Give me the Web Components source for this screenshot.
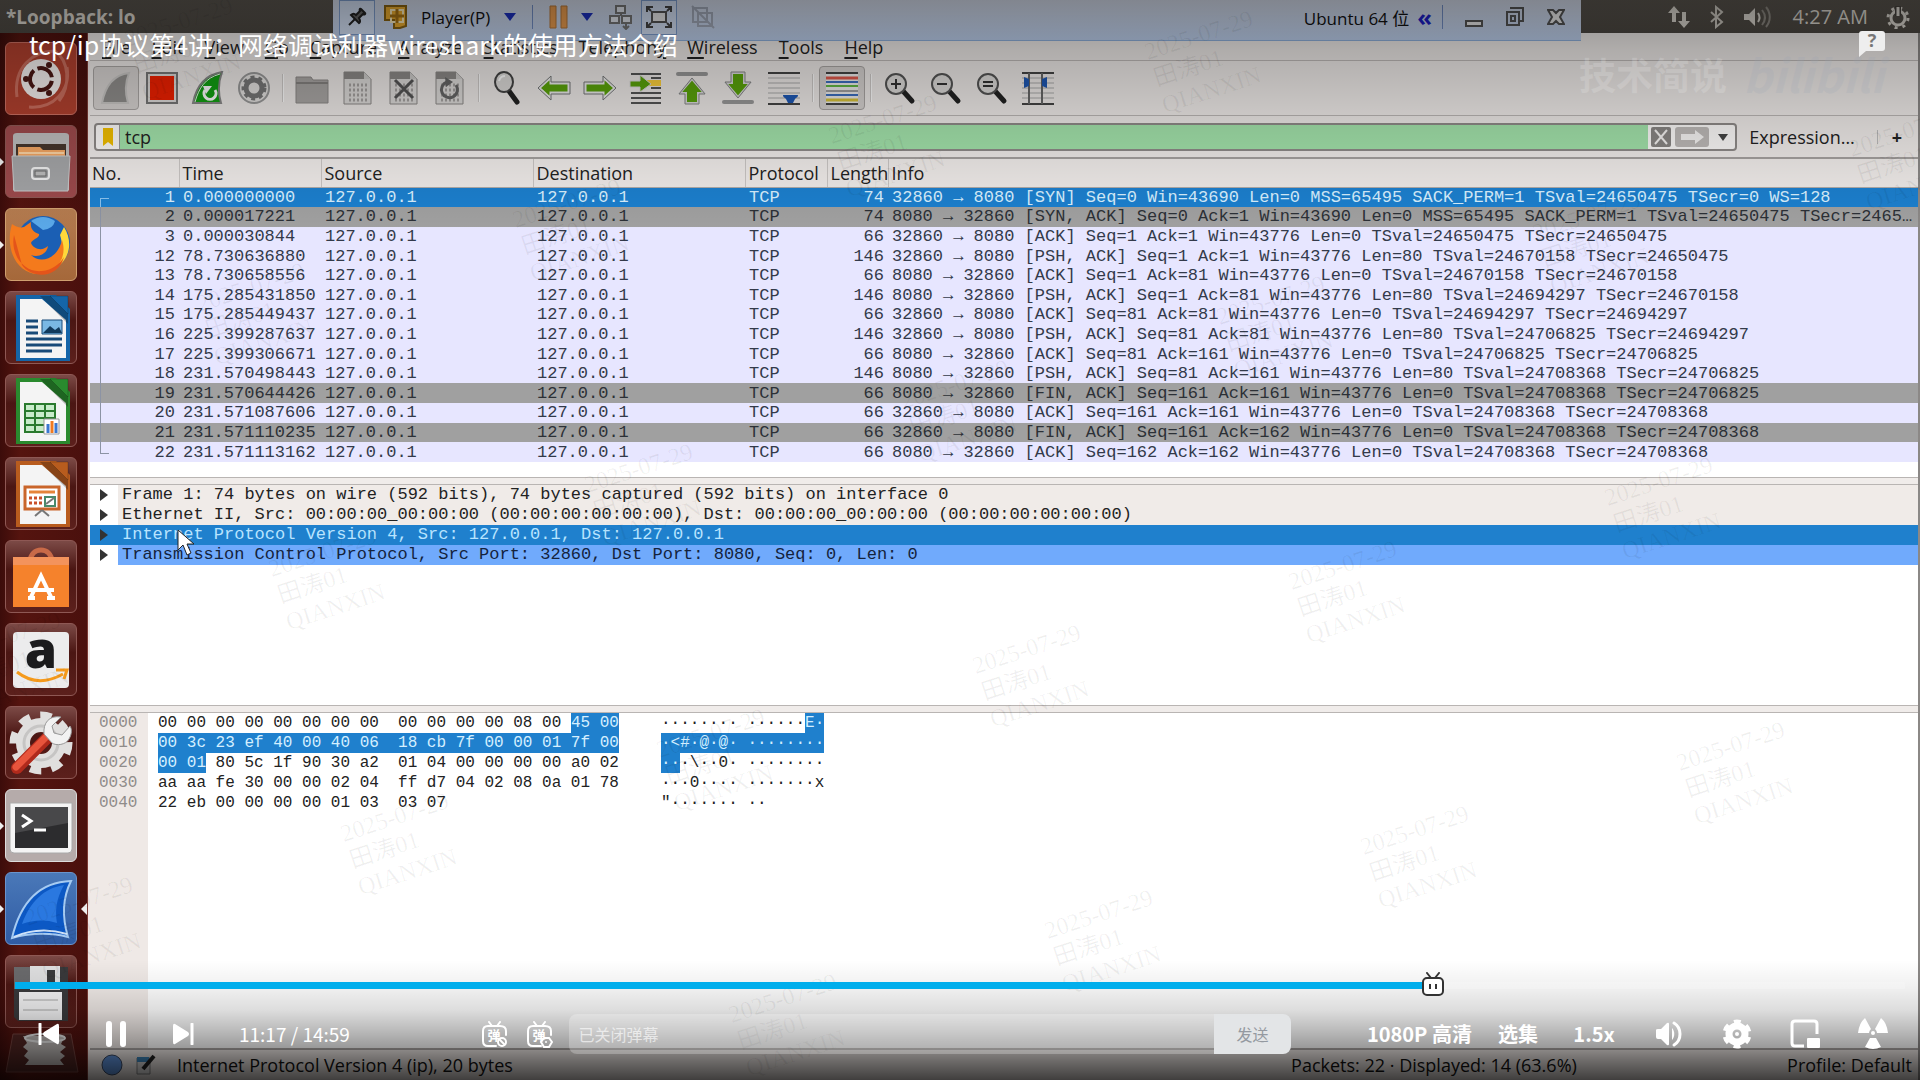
<!DOCTYPE html>
<html lang="zh-CN">
<head>
<meta charset="utf-8">
<title>tcp/ip协议第4讲</title>
<style>
    body {
        margin: 0;
        background: #000;
        font-family: "Open Sans", "Noto Sans CJK SC", sans-serif;
    }
</style>
</head>
<body>
<video-player>
    <ubuntu-desktop slot="screen"></ubuntu-desktop>
    <water-mark slot="overlay"></water-mark>
    <video-header slot="overlay">tcp/ip协议第4讲：网络调试利器wireshark的使用方法介绍</video-header>
    <player-controls slot="controls" current="677" duration="899"></player-controls>
</video-player>

<script>
const svg = (w, h, body) =>
    `<svg width="${w}" height="${h}" viewBox="0 0 ${w} ${h}" fill="none" aria-hidden="true">${body}</svg>`;

const page = `<path d="M3 1h20l7 7v25H3z" fill="#dedcda" stroke="#8d8a88"/><path d="M3 1h20l7 7H3z" fill="#8d8a88"/><path d="M23 1v7h7" fill="#d0cecc"/>`;
const bits = `<path d="M8 14h18M8 19h18M8 24h18M8 29h18" stroke="#a5a2a0" stroke-width="3" stroke-dasharray="2 2"/>`;
const lens = `<path d="M20 20l9 10" stroke="#222" stroke-width="5" stroke-linecap="round"/><circle cx="13" cy="13" r="10" fill="#dedcda" stroke="#555" stroke-width="2"/>`;
const lines = `<path d="M1 7h32M1 12h32M1 17h32M1 22h32M1 27h32" stroke="#aaa" stroke-width="1"/><path d="M1 2h32M1 33h32" stroke="#444" stroke-width="2"/>`;

const ICONS = {
    fin: svg(34, 34, `<path d="M3 32C6 16 14 4 30 2c-4 10-4 20-1 30z" fill="#8f8d8b" stroke="#c8c6c4" stroke-width="2"/>`),
    stop: svg(34, 34, `<path d="M2 2h30v30H2z" fill="#dedcda" stroke="#777" stroke-width="2"/><path d="M5 5h24v24H5z" fill="#f02000"/>`),
    restart: svg(34, 34, `<path d="M2 32C5 16 13 4 31 1c-4 11-4 21-1 31z" fill="#12a012" stroke="#888" stroke-width="2"/><path d="M4 31C8 17 14 7 29 3" stroke="#eee"/><path d="M14 19a6 6 0 1 0 10 0" stroke="#fff" stroke-width="3"/><path d="M12 15h9l-6 8z" fill="#fff"/>`),
    options: svg(34, 34, `<circle cx="17" cy="17" r="15" fill="#e4e2e0" stroke="#999" stroke-width="2"/><circle cx="17" cy="17" r="8" stroke="#777" stroke-width="5"/><circle cx="17" cy="17" r="11" stroke="#777" stroke-width="3" stroke-dasharray="4 4"/>`),
    folder: svg(34, 34, `<path d="M1 6h15l2 3h15v23H1z" fill="#aaa7a5" stroke="#8d8a88"/><path d="M1 12h32" stroke="#858280" stroke-width="2"/>`),
    save: svg(34, 34, page + bits),
    close: svg(34, 34, page + bits + `<path d="M8 9l18 18M26 9L8 27" stroke="#555" stroke-width="3"/>`),
    reload: svg(34, 34, page + bits + `<path d="M14 11a8 8 0 1 0 9 3" stroke="#666" stroke-width="3"/><path d="M12 6l8 5-7 5z" fill="#666"/>`),
    find: svg(34, 34, `<path d="M18 20l8 11" stroke="#222" stroke-width="5" stroke-linecap="round"/><ellipse cx="13" cy="11" rx="9" ry="10" fill="#dedcda" stroke="#444" stroke-width="2"/><path d="M8 10c1-4 3-5 6-5" stroke="#fff" stroke-width="2"/>`),
    back: svg(34, 34, `<path d="M2 17L14 6v6h18v10H14v6z" fill="#5ba50a" stroke="#eee" stroke-width="3"/><path d="M1 17L14 5v6h19v12H14v6z" stroke="#777"/>`),
    forward: svg(34, 34, `<path d="M32 17L20 6v6H2v10h18v6z" fill="#5ba50a" stroke="#eee" stroke-width="3"/><path d="M33 17L20 5v6H1v12h19v6z" stroke="#777"/>`),
    goto: svg(34, 34, `<path d="M2 3h30M2 22h30M2 27h30M2 32h30M22 7h10M22 17h10" stroke="#555" stroke-width="2"/><path d="M18 12h14" stroke="#ffd23c" stroke-width="6"/><path d="M1 10h10V4l11 9-11 8v-5H1z" fill="#5ba50a" stroke="#ddd"/>`),
    first: svg(34, 34, `<path d="M3 3h28" stroke="#999" stroke-width="4" stroke-linecap="round"/><path d="M17 8l12 14h-6v10H11V22H5z" fill="#5ba50a" stroke="#ddd" stroke-width="2"/><path d="M17 7l13 16h-6v10H10V23H4z" stroke="#888"/>`),
    last: svg(34, 34, `<path d="M3 31h28" stroke="#999" stroke-width="4" stroke-linecap="round"/><path d="M17 26L5 12h6V2h12v10h6z" fill="#5ba50a" stroke="#ddd" stroke-width="2"/><path d="M17 27L4 11h6V1h14v10h6z" stroke="#888"/>`),
    autoscroll: svg(34, 34, lines + `<path d="M16 24h15c0 3-3 3-3 4l-2 4h-5l-2-4c0-1-3-1-3-4z" fill="#1e58b4"/>`),
    colorize: svg(34, 34, `<path d="M1 1h32v33H1z" fill="#eee"/><path d="M1 2h32M1 33h32" stroke="#444" stroke-width="2"/><path d="M1 7h32" stroke="#e0584a" stroke-width="3"/><path d="M1 11h32M1 24h32" stroke="#3c6fc0" stroke-width="2"/><path d="M1 15h32" stroke="#62b843" stroke-width="2"/><path d="M1 20h32" stroke="#555"/><path d="M1 29h32" stroke="#d9c33a" stroke-width="3"/>`),
    zoomin: svg(34, 34, lens + `<path d="M8 13h10M13 8v10" stroke="#333" stroke-width="2"/>`),
    zoomout: svg(34, 34, lens + `<path d="M8 13h10" stroke="#333" stroke-width="2"/>`),
    zoomone: svg(34, 34, lens + `<path d="M8 11h10M8 15h10" stroke="#333" stroke-width="2"/>`),
    columns: svg(34, 34, lines + `<path d="M8 2v31M21 2v31" stroke="#666" stroke-width="2"/><path d="M3 6l5 2v7l-5 2zM26 6l-5 2v7l5 2z" fill="#1e58b4"/>`),

    pin: svg(20, 20, `<path d="M2 18l6-6" stroke="#222" stroke-width="2"/><path d="M4 8l8 8c2-1 1-3 0-5l4-4c1 1 3 0 2-1l-4-4c-1-1-2 1-1 2L9 8C8 7 6 6 4 8z" fill="#666" stroke="#222" stroke-width="2"/>`),
    vmware: svg(26, 26, `<path d="M2 2h21v20l-6 2h-6v-8H2z" fill="#f0b030" stroke="#8a6412" stroke-width="2"/><path d="M8 6h12v12H8z" stroke="#fff0c0" stroke-width="2"/><path d="M14 5v14M7 12h14" stroke="#a87414" stroke-width="3"/>`),
    pause: svg(20, 24, `<path d="M1 1h6v22H1zM12 1h6v22h-6z" fill="#f0a050" stroke="#b87838"/>`),
    network: svg(24, 26, `<path d="M7 2h9v7H7zM1 12h9v7H1zM13 12h9v7h-9z" fill="#e8ecf4" stroke="#777" stroke-width="2"/><path d="M12 9v3M17 19v6M14 22l3 3 3-3" stroke="#777" stroke-width="2"/>`),
    fullscreen: svg(26, 22, `<path d="M6 6h14v10H6z" fill="#eee" stroke="#555" stroke-width="2"/><path d="M1 6V1h6M19 1h6v5M25 16v5h-6M7 21H1v-5M1 1l4 4M25 1l-4 4M25 21l-4-4M1 21l4-4" stroke="#444" stroke-width="2"/>`),
    unity: svg(26, 24, `<path d="M2 3h14v14H2zM7 8h14v13H7zM1 1l22 22" stroke="#a3abbb" stroke-width="2"/>`),
    min: svg(18, 24, `<path d="M1 16h16v5H1z" fill="#eee" stroke="#555" stroke-width="2"/>`),
    restore: svg(20, 20, `<path d="M5 1h13v13h-3M2 5h12v13H2z" stroke="#555" stroke-width="2"/><path d="M6 9h4v5H6z" stroke="#555" stroke-width="2"/>`),
    quit: svg(18, 18, `<path d="M1 2h5l3 3 3-3h5l-4 7 4 7h-5l-3-3-3 3H1l4-7z" fill="#eee" stroke="#555" stroke-width="2"/>`),

    updown: svg(24, 24, `<path d="M1 8l6-7 6 7H9v9H5V8zM23 16l-6 7-6-7h4V7h4v9z" fill="#dedad2"/>`),
    bluetooth: svg(16, 24, `<path d="M2 7l11 10-6 5V2l6 5L2 17" stroke="#cfcbc3" stroke-width="2"/>`),
    sound: svg(28, 24, `<path d="M1 9h5l6-6v18l-6-6H1z" fill="#dedad2"/><path d="M15 8c2 3 2 6 0 9" stroke="#dedad2" stroke-width="2"/><path d="M19 5c4 5 4 10 0 15M23 2c5 6 5 14 0 20" stroke="#8d8982" stroke-width="2"/>`),
    power: svg(24, 24, `<circle cx="12" cy="13" r="7" stroke="#dedad2" stroke-width="3"/><circle cx="12" cy="13" r="10" stroke="#dedad2" stroke-width="3" stroke-dasharray="3 5"/><path d="M12 1v10" stroke="#45413c" stroke-width="6"/><path d="M12 2v9" stroke="#dedad2" stroke-width="3"/>`),

    dash: svg(64, 64, `<path d="M8 50C4 20 24 4 46 4c14 10 16 34 4 50M20 60C44 62 62 44 58 20" stroke="#e29a8c" stroke-width="3" opacity=".5"/><circle cx="32" cy="32" r="20" fill="#f5f1ef"/><circle cx="32" cy="32" r="11" stroke="#4a1814" stroke-width="4" stroke-dasharray="19 4" transform="rotate(10 32 32)"/><g fill="#4a1814"><circle cx="17" cy="32" r="3"/><circle cx="40" cy="18" r="3"/><circle cx="40" cy="46" r="3"/></g>`),
    files: svg(64, 64, `<path d="M4 6q0-3 4-3h48q4 0 4 3v54H4z" fill="#bdbcbc"/><path d="M7 14h50v16H7z" fill="#46362c"/><path d="M9 17h22l3 3h22v12H9z" fill="#f2a562"/><path d="M10 23h45" stroke="#fbd3a4" stroke-width="2"/><path d="M3 26h58l-2 35H5z" fill="#a3a4a6" stroke="#c8c9ca"/><rect x="23" y="38" width="17" height="11" rx="3" stroke="#eee" stroke-width="2"/><rect x="26" y="41" width="11" height="5" fill="#bbb" stroke="#666"/>`),
    firefox: svg(66, 64, `<circle cx="35" cy="30" r="27" fill="#1b5fb4"/><path d="M23 8q12-8 24 0-2 8-12 9z" fill="#5aa8e8"/><path d="M56 14c10 16 5 34-10 42 8-10 10-22 6-34z" fill="#ffd83a"/><path d="M4 11c4 3 8 4 12 3l7-5c-1 6 2 10 8 12 1 4-7 5-8 9 3 7 12 8 17 3-1 8-10 12-17 9 10 10 27 3 31-15 6 18-6 34-24 34C10 61-4 37 4 11z" fill="#f47a1c"/><path d="M6 22c-4 20 10 38 28 36 10-1 18-7 22-14-6 22-32 22-42 8z" fill="#e4541a"/>`),
    writer: doc("#1565a8", `<path d="M18 29h12M18 35h12M18 41h12M18 47h36M18 53h36M18 59h26" stroke="#184a78" stroke-width="3"/><path d="M34 28h20v14H34z" fill="#7ab8e4" stroke="#184a78"/><path d="M35 41l7-7 5 4 4-3 3 6z" fill="#123a5c"/>`),
    calc: doc("#2a8a2e", `<path d="M17 29h30v28H17z" fill="#c8ecca" stroke="#2a7a2e" stroke-width="2"/><path d="M17 36h30M17 43h30M17 50h30M27 29v28M37 29v28" stroke="#2a7a2e" stroke-width="2"/><path d="M36 44h15v15H36z" fill="#fff" stroke="#999"/><path d="M40 49v9M48 48v10" stroke="#3b78d0" stroke-width="3"/><path d="M44 46v12" stroke="#f07a20" stroke-width="3"/>`),
    impress: doc("#b85c1e", `<path d="M17 29h34v22H17z" fill="#fff" stroke="#c9652a" stroke-width="3"/><path d="M21 34h26" stroke="#e6843a" stroke-width="3"/><path d="M21 40h13M21 45h13" stroke="#c9502a" stroke-width="3" stroke-dasharray="3 2"/><path d="M37 39h10v9H37z" stroke="#4a8a6a" stroke-width="2"/><path d="M38 46l8-6M34 52l-7 6M34 52l7 6" stroke="#777" stroke-width="2"/>`),
    software: svg(62, 62, `<path d="M20 16c0-16 22-16 22 0" stroke="#c86a48" stroke-width="5"/><path d="M3 11h56v50H3z" fill="#f5822c"/><path d="M3 11h56v8H3z" fill="#f3935c"/><path d="M20 53l11-23 11 23M18 44h26M18 52h7M37 52h8" stroke="#fff" stroke-width="4"/>`),
    amazon: svg(60, 60, `<rect x="2" y="2" width="56" height="56" rx="4" fill="#ececed"/><text x="30" y="38" font-family="Open Sans" font-weight="800" font-size="52" text-anchor="middle" fill="#1b1b1d">a</text><path d="M6 42c14 11 30 11 46 2" stroke="#f59a1c" stroke-width="3"/><path d="M45 40l11 0-3 9" stroke="#f59a1c" stroke-width="3"/>`),
    settings: svg(66, 66, `<circle cx="33" cy="33" r="18" stroke="#e0dfde" stroke-width="14"/><circle cx="33" cy="33" r="27" stroke="#e0dfde" stroke-width="9" stroke-dasharray="11 10"/><circle cx="33" cy="33" r="17" stroke="#c6c5c4" stroke-width="3"/><path d="M9 58l30-30" stroke="#b02a1c" stroke-width="12" stroke-linecap="round"/><path d="M8 57l29-29" stroke="#e8543c" stroke-width="7" stroke-linecap="round"/><path d="M36 24l8 9c4 3 14 2 17-4 3-5 3-10 1-13l-8 9-8-2-2-7 9-9c-12-2-18 6-17 17z" fill="#f2f2f2" stroke="#999"/>`),
    terminal: svg(66, 62, `<path d="M2 8h62v46q0 4-4 4H6q-4 0-4-4z" fill="#f4f4f4" stroke="#aaa"/><path d="M7 12h53v41H7z" fill="#2c2c2e"/><path d="M7 12h53v16L7 38z" fill="#48484a"/><path d="M14 20l9 6-9 6M26 35h12" stroke="#fff" stroke-width="3"/>`),
    wireshark: svg(66, 66, `<path d="M4 62C12 28 30 6 63 5c-9 18-9 36-3 56-18-5-40-4-56 1z" fill="#0c58c4" stroke="#a6cbf2" stroke-width="2"/><path d="M14 48C22 26 36 12 56 9c-8 14-9 26-7 38-12-4-24-3-35 1z" fill="#2a78e0"/><path d="M6 61c18-8 36-8 53-3" stroke="#cfe2f8" stroke-width="2"/>`),
    floppy: svg(62, 62, `<path d="M4 6h54v54H8l-4-4z" fill="#39393b"/><path d="M4 6h18v22H4z" fill="#6a6a6c"/><path d="M20 5h30v24H20z" fill="#dededf"/><path d="M37 9h8v16h-8z" fill="#3a3a3c"/><path d="M9 31h43v28H9z" fill="#f2f2f3"/><path d="M13 39h35M13 49h35" stroke="#ccc" stroke-width="2"/>`),
    trash: svg(74, 42, `<path d="M8 2h58l7 38H1z" fill="#4c2320" stroke="#70403c"/><path d="M18 4h42l-4 8 5 3-6 5 5 4-5 4 4 5H20l4-5-5-4 4-5-5-4 4-4z" fill="#b3aeac"/><ellipse cx="40" cy="6" rx="20" ry="4" stroke="#ddd" stroke-width="2"/>`),

    expert: svg(22, 22, `<circle cx="11" cy="11" r="10" fill="#5f93dc" stroke="#3a4a66"/>`),
    comment: svg(22, 22, `<path d="M2 4h13v16H2z" fill="#ddd" stroke="#888"/><path d="M2 3h12v5H2z" fill="#3f8ac0"/><path d="M19 2L8 15" stroke="#222" stroke-width="4"/>`),
    bookmark: svg(12, 20, `<path d="M1 1h10v18l-5-4-5 4z" fill="#f0bd00"/>`),
    clear: svg(20, 20, `<rect width="20" height="20" rx="2" fill="#888583"/><path d="M4 3l12 14M16 3L4 17" stroke="#f2f0ef" stroke-width="2"/>`),
    apply: svg(34, 20, `<rect width="34" height="20" rx="3" fill="#bdb9b7"/><path d="M6 7h14V3l9 7-9 7v-4H6z" fill="#f5f3f2"/>`),
    down: svg(10, 8, `<path d="M0 1h10L5 8z" fill="#444"/>`),
    bluedown: svg(12, 8, `<path d="M0 0h12L6 8z" fill="#1c30c0"/>`),

    prev: svg(22, 22, `<path d="M2 1v20" stroke="#fff" stroke-width="3" stroke-linecap="round"/><path d="M19 1q2-1 2 2v16q0 3-2 2L6 13q-2-2 0-4z" fill="#fff"/>`),
    play: svg(22, 26, `<path d="M4 3v20M18 3v20" stroke="#fff" stroke-width="6" stroke-linecap="round"/>`),
    next: svg(22, 22, `<path d="M20 1v20" stroke="#fff" stroke-width="3" stroke-linecap="round"/><path d="M3 1Q1 0 1 3v16q0 3 2 2l13-8q2-2 0-4z" fill="#fff"/>`),
    danmu: tv(`<circle cx="21" cy="21" r="4" stroke="#fff" stroke-width="2"/><path d="M18 18l6 6" stroke="#fff" stroke-width="2"/>`),
    danmuset: tv(`<path d="M18 17h5l3 4-3 5h-5l-3-5z" stroke="#fff" stroke-width="2"/><circle cx="20" cy="21" r="1" fill="#fff"/>`),
    volume: svg(30, 30, `<path d="M2 11q0-1 2-1h3l6-6q2-1 2 1v20q0 2-2 1l-6-6H4q-2 0-2-2z" fill="#fff"/><path d="M18 9c3 3 3 9 0 12z" fill="#fff"/><path d="M20 4c8 5 8 17 0 22" stroke="#fff" stroke-width="3" stroke-linecap="round"/>`),
    gear: svg(30, 30, `<circle cx="15" cy="15" r="8" stroke="#fff" stroke-width="7"/><circle cx="15" cy="15" r="12" stroke="#fff" stroke-width="5" stroke-dasharray="6.57 6" transform="rotate(14 15 15)"/><circle cx="15" cy="15" r="2" fill="#fff"/>`),
    pip: svg(32, 30, `<path d="M15 27H6q-3 0-3-3V5q0-3 3-3h19q3 0 3 3v10" stroke="#fff" stroke-width="3"/><rect x="18" y="19" width="13" height="10" rx="1" fill="#fff"/>`),
    wide: svg(30, 32, `<circle cx="15" cy="15" r="2" fill="#fff"/><path d="M0 15Q1 5 7 0l6 11q-2 2-2 4zM30 15Q29 5 23 0l-6 11q2 2 2 4zM12 20h6l5 9q-8 4-16 0z" fill="#fff"/>`),
    thumb: svg(24, 26, `<path d="M6 1l4 5M18 1l-4 5" stroke="#333" stroke-width="2" stroke-linecap="round"/><rect x="2" y="6" width="20" height="17" rx="4" fill="#fff" stroke="#333" stroke-width="2"/><path d="M9 12v5M15 12v5" stroke="#333" stroke-width="2"/>`),
    help: svg(28, 28, `<path d="M4 1h20q3 0 3 3v14q0 3-3 3H8l-7 6V4q0-3 3-3z" fill="#eee"/><text x="14" y="17" font-family="Open Sans" font-weight="700" font-size="18" text-anchor="middle" fill="#777">?</text>`),
    cursor: svg(18, 28, `<path d="M1 1v20l5-5 4 10 4-2-4-9h7z" fill="#fff" stroke="#222"/>`),
};

function doc(color, body) {
    return svg(66, 72, `<path d="M8 3h40l14 14v52H8z" fill="${color}"/><path d="M12 7h22l24 21v38H12z" fill="#f4f4f4"/><path d="M42 4h18v18z" fill="${color}" stroke="#0003"/><path d="M32 4l28 28V22L42 4z" fill="#0004"/>` + body);
}

function tv(body) {
    return svg(27, 27, `<path d="M8 1l3 4M19 1l-3 4M15 25H7q-5 0-5-5v-10q0-5 5-5h12q6 0 6 5v4" stroke="#fff" stroke-width="2" stroke-linecap="round"/><text x="13" y="19" font-family="Noto Sans CJK SC" font-weight="700" font-size="13" text-anchor="middle" fill="#fff">弹</text>` + body);
}

const BASE = `
    *, *::before { box-sizing: border-box; }
    svg { display: block; flex: none; }
    button, input { font: inherit; color: inherit; background: none; border: 0; padding: 0; margin: 0; }
    button { display: flex; align-items: center; justify-content: center; white-space: nowrap; cursor: pointer; }
`;

class BaseElement extends HTMLElement {
    constructor() {
        super();
        this.attachShadow({ mode: "open" });
    }

    connectedCallback() {
        this.shadowRoot.innerHTML = `<style>${BASE}${this.styles()}</style>${this.render()}`;
    }

    iconButton(name, label, cls = "") {
        return `<button type="button" class="${cls}" aria-label="${label}">${ICONS[name]}</button>`;
    }
}

class VideoPlayer extends BaseElement {
    styles() {
        return `
        :host { display: grid; grid-template: minmax(100vh, auto) / minmax(0, 1fr); overflow: hidden; }
        .layer { grid-area: 1 / 1; display: grid; min-width: 0; isolation: isolate; }
        ::slotted([slot="overlay"]) { grid-area: 1 / 1; }
        .shade {
            pointer-events: none;
            background:
                linear-gradient(#0006, #0004 50px, #0002 130px, #0000 230px),
                linear-gradient(0deg, #000b, #0008 20px, #0006 32px, #0004 50px, #0002 70px, #0001 90px, #0000 120px);
        }
        .overlay { pointer-events: none; }
        .bottom { align-items: end; }
        `;
    }

    render() {
        return `
        <div class="layer"><slot name="screen"></slot></div>
        <div class="layer shade"></div>
        <div class="layer overlay"><slot name="overlay"></slot></div>
        <div class="layer bottom"><slot name="controls"></slot></div>
        `;
    }
}

class UbuntuDesktop extends BaseElement {
    styles() {
        return `
        :host { display: grid; grid-template: 33px minmax(0, 1fr) / 88px minmax(0, 1fr); position: relative; background: #4c110e; }
        top-panel { grid-column: 1 / -1; }
        vm-toolbar { position: absolute; top: 0; left: 333px; right: 339px; }
        .cursor { position: absolute; left: 177px; top: 529px; }
        `;
    }

    render() {
        return `
        <top-panel>*Loopback: lo</top-panel>
        <unity-launcher></unity-launcher>
        <wireshark-window></wireshark-window>
        <vm-toolbar></vm-toolbar>
        <div class="cursor">${ICONS.cursor}</div>
        `;
    }
}

class TopPanel extends BaseElement {
    styles() {
        return `
        :host { display: flex; align-items: center; justify-content: space-between; padding: 0 10px 0 6px;
            background: linear-gradient(#5c5750, #4b4741); color: #dedad2; font-size: 19px; }
        .tray { display: flex; align-items: center; gap: 18px; font-size: 20px; }
        .tray span { margin-left: 4px; }
        `;
    }

    render() {
        return `<b><slot></slot></b>
        <div class="tray">${ICONS.updown}${ICONS.bluetooth}${ICONS.sound}<span>4:27 AM</span>${ICONS.power}</div>`;
    }
}

class VmToolbar extends BaseElement {
    styles() {
        return `
        :host { display: flex; justify-content: space-between; height: 41px; padding: 0 16px 6px 6px;
            background: linear-gradient(#d8dfee, #bdd0ee); border-bottom: 1px solid #8fb0dc; font-size: 17px; color: #111; }
        div { display: flex; align-items: center; }
        .box { width: 36px; height: 35px; border: 1px solid #7f9fd0; background: #d6e3f8; }
        .sep { width: 1px; height: 24px; background: #7490c8; }
        .left { gap: 8px; }
        .player { gap: 14px; margin: 0 8px 0 4px; }
        .pause { gap: 12px; margin: 0 8px; }
        .box + .off { margin-left: 6px; }
        .right { gap: 22px; }
        .name { gap: 8px; }
        .more { color: #1c20c8; font-size: 24px; line-height: 24px; font-weight: 700; }
        .name .sep { margin-left: 2px; }
        `;
    }

    render() {
        return `
        <div class="left">
            ${this.iconButton("pin", "Pin", "box")}
            ${ICONS.vmware}
            <button type="button" class="player">Player(P) ${ICONS.bluedown}</button>
            <span class="sep"></span>
            <button type="button" class="pause" aria-label="Suspend">${ICONS.pause}${ICONS.bluedown}</button>
            ${this.iconButton("network", "Send keys")}
            ${this.iconButton("fullscreen", "Full screen", "box")}
            ${this.iconButton("unity", "Unity", "off")}
        </div>
        <div class="right">
            <div class="name"><span>Ubuntu 64 位</span><span class="more">«</span><span class="sep"></span></div>
            ${this.iconButton("min", "Minimize")}
            ${this.iconButton("restore", "Restore")}
            ${this.iconButton("quit", "Close")}
        </div>
        `;
    }
}

class UnityLauncher extends BaseElement {
    styles() {
        return `
        :host { display: block; padding: 9px 10px 0 5px; border-right: 1px solid #7c3a34;
            background: linear-gradient(90deg, #3c0c0a, #55140f 20px, #4a100d); }
        nav { display: grid; grid-auto-rows: 73px; gap: 10px; margin-bottom: 4px; }
        button { position: relative; border-radius: 6px; border: 1px solid #8e5854; background: linear-gradient(#7c4a46, #4b1613 40%, #5c201c); }
        .running::before { content: ""; position: absolute; left: -6px; top: 32px; border: 4px solid transparent; border-left-color: #eee; border-right: 0; }
        .dash { background: #b0402e; border-color: #cc7062; }
        .files { background: #9c4a4c; }
        .firefox { background: linear-gradient(#b57c50, #a5683a); border-color: #d0a070; }
        .terminal { background: #b5abaa; border-color: #ddd; }
        .wireshark { background: linear-gradient(#4a78b8, #2f5ca4); border-color: #6a94cc; }
        .wireshark::after { content: ""; position: absolute; right: -11px; top: 30px; border: 6px solid transparent; border-right-color: #eee; border-left: 0; }
        .trash { border: 0; background: none; }
        `;
    }

    render() {
        const apps = ["dash", "files", "firefox", "writer", "calc", "impress", "software", "amazon", "settings", "terminal", "wireshark", "floppy"];
        const running = ["files", "firefox", "terminal", "wireshark"];
        const item = (name) => this.iconButton(name, name, name + (running.includes(name) ? " running" : ""));
        return `<nav>${apps.map(item).join("")}</nav>${item("trash")}`;
    }
}

class WiresharkWindow extends BaseElement {
    styles() {
        return `
        :host { display: flex; flex-direction: column; min-width: 0; background: #f0ecea; border-left: 2px solid #f0e6e4;
            border-right: 2px solid #8b8886; font-size: 18px; color: #222; }
        packet-list { flex: 318 1 0; }
        packet-details { flex: 220 1 0; }
        packet-bytes { flex: 335 1 0; }
        .split { height: 8px; flex: none; background: #f0ecea; border: solid #b9b5b3; border-width: 1px 0; }
        `;
    }

    render() {
        return `
        <menu-bar></menu-bar>
        <tool-bar></tool-bar>
        <filter-bar value="tcp"></filter-bar>
        <packet-list></packet-list>
        <div class="split"></div>
        <packet-details></packet-details>
        <div class="split"></div>
        <packet-bytes></packet-bytes>
        <status-bar></status-bar>
        `;
    }
}

class MenuBar extends BaseElement {
    styles() {
        return `
        :host { display: flex; gap: 21px; height: 28px; padding: 0 12px; background: #efebe9; border-bottom: 1px solid #c0bbb9; }
        button { line-height: 28px; }
        u { text-underline-offset: 3px; text-decoration-thickness: 2px; }
        `;
    }

    render() {
        return ["_File", "_Edit", "_View", "_Go", "_Capture", "_Analyze", "_Statistics", "Telephon_y", "_Wireless", "_Tools", "_Help"]
            .map((m) => `<button type="button"><span>${m.replace(/_(.)/, "<u>$1</u>")}</span></button>`)
            .join("");
    }
}

class ToolBar extends BaseElement {
    styles() {
        return `
        :host { display: flex; align-items: center; height: 55px; padding: 0 3px; background: #f0ecea; border-bottom: 1px solid #bcb8b6; }
        button { width: 46px; height: 44px; border: 1px solid transparent; border-radius: 4px; }
        .on { background: #d8d4d2; border-color: #aaa6a4; }
        .sep { width: 2px; height: 28px; margin: 0 5px; background: #cfcbc9; border-right: 1px solid #fff; }
        `;
    }

    render() {
        const names = "fin stop restart options | folder save close reload | find back forward goto first last autoscroll | colorize | zoomin zoomout zoomone columns";
        return names.split(" ").map((n) => n === "|"
            ? `<span class="sep"></span>`
            : this.iconButton(n, n, n === "fin" || n === "colorize" ? "on" : "")).join("");
    }
}

class FilterBar extends BaseElement {
    styles() {
        return `
        :host { display: flex; align-items: center; height: 43px; padding: 0 16px 0 4px; background: #efebe9; border-bottom: 2px solid #a5a19f; }
        .box { flex: 1; display: flex; align-items: center; height: 28px; border: 2px solid #8e8a88; border-radius: 4px; background: #fbf9f8; }
        .mark { width: 24px; height: 24px; border-right: 1px solid #999; }
        input { flex: 1; min-width: 0; height: 24px; padding: 0 5px; background: #a2e2aa; outline: 0; }
        .actions { display: flex; gap: 4px; padding: 0 2px 0 3px; }
        .drop { width: 20px; }
        .expr { padding: 0 14px 0 12px; }
        .sep { width: 1px; height: 14px; background: #bbb; margin: 0 14px 0 8px; }
        .add { font-weight: 700; }
        `;
    }

    render() {
        return `
        <div class="box">
            ${this.iconButton("bookmark", "Bookmarks", "mark")}
            <input type="text" aria-label="Display filter" value="${this.getAttribute("value")}">
            <div class="actions">
                ${this.iconButton("clear", "Clear")}
                ${this.iconButton("apply", "Apply")}
                ${this.iconButton("down", "Recent filters", "drop")}
            </div>
        </div>
        <button type="button" class="expr">Expression…</button>
        <span class="sep"></span>
        <button type="button" class="add">+</button>
        `;
    }
}

const OUT = "32860 → 8080";
const IN = "8080 → 32860";
const PACKETS = [
    [1, "0.000000000", 74, OUT + " [SYN] Seq=0 Win=43690 Len=0 MSS=65495 SACK_PERM=1 TSval=24650475 TSecr=0 WS=128", "sel"],
    [2, "0.000017221", 74, IN + " [SYN, ACK] Seq=0 Ack=1 Win=43690 Len=0 MSS=65495 SACK_PERM=1 TSval=24650475 TSecr=2465…", "gray"],
    [3, "0.000030844", 66, OUT + " [ACK] Seq=1 Ack=1 Win=43776 Len=0 TSval=24650475 TSecr=24650475"],
    [12, "78.730636880", 146, OUT + " [PSH, ACK] Seq=1 Ack=1 Win=43776 Len=80 TSval=24670158 TSecr=24650475"],
    [13, "78.730658556", 66, IN + " [ACK] Seq=1 Ack=81 Win=43776 Len=0 TSval=24670158 TSecr=24670158"],
    [14, "175.285431850", 146, IN + " [PSH, ACK] Seq=1 Ack=81 Win=43776 Len=80 TSval=24694297 TSecr=24670158"],
    [15, "175.285449437", 66, OUT + " [ACK] Seq=81 Ack=81 Win=43776 Len=0 TSval=24694297 TSecr=24694297"],
    [16, "225.399287637", 146, OUT + " [PSH, ACK] Seq=81 Ack=81 Win=43776 Len=80 TSval=24706825 TSecr=24694297"],
    [17, "225.399306671", 66, IN + " [ACK] Seq=81 Ack=161 Win=43776 Len=0 TSval=24706825 TSecr=24706825"],
    [18, "231.570498443", 146, IN + " [PSH, ACK] Seq=81 Ack=161 Win=43776 Len=80 TSval=24708368 TSecr=24706825"],
    [19, "231.570644426", 66, IN + " [FIN, ACK] Seq=161 Ack=161 Win=43776 Len=0 TSval=24708368 TSecr=24706825", "gray"],
    [20, "231.571087606", 66, OUT + " [ACK] Seq=161 Ack=161 Win=43776 Len=0 TSval=24708368 TSecr=24708368"],
    [21, "231.571110235", 66, OUT + " [FIN, ACK] Seq=161 Ack=162 Win=43776 Len=0 TSval=24708368 TSecr=24708368", "gray"],
    [22, "231.571113162", 66, IN + " [ACK] Seq=162 Ack=162 Win=43776 Len=0 TSval=24708368 TSecr=24708368"],
];

class PacketList extends BaseElement {
    styles() {
        return `
        :host { display: block; background: #fff; min-height: 0; overflow: hidden; }
        table { width: 100%; height: 303px; table-layout: fixed; border-collapse: collapse; }
        th, td { padding: 0 4px; text-align: left; white-space: nowrap; overflow: hidden; }
        th { height: 28px; padding: 0 2px; font-weight: 400; font-size: 18px; line-height: 26px; background: #f0ecea;
            border-bottom: 1px solid #b0acaa; border-right: 1px solid #cbc7c5; }
        th:not(:first-child) { padding: 0 3px; }
        th:last-child { border-right: 0; }
        td { height: 19px; font: 17px/19px "Liberation Mono", monospace; color: #333a4a; background: #e7e6ff; }
        .num { text-align: right; }
        .gray td { background: #a0a0a0; color: #2c3036; }
        .sel td { background: #1c80cf; color: #d8f0ff; }
        td:first-child { position: relative; }
        td:first-child::before { content: ""; position: absolute; left: 10px; top: 0; bottom: 0; width: 9px; border-left: 1px solid #8c93a4; }
        tr:first-child td::before { top: 10px; border-top: 1px solid #8cc4f0; border-left-color: #8cc4f0; }
        tr:last-child td::before { bottom: 8px; border-bottom: 1px solid #8c93a4; }
        .no { width: 89px; } .time { width: 142px; } .addr { width: 212px; } .proto { width: 82px; } .len { width: 61px; }
        `;
    }

    render() {
        const rows = PACKETS.map(([no, time, len, info, cls = ""]) => `<tr class="${cls}"><td class="num">${no}</td><td>${time}</td><td>127.0.0.1</td><td>127.0.0.1</td><td>TCP</td><td class="num">${len}</td><td>${info}</td></tr>`);
        return `
        <table>
            <thead><tr><th class="no">No.</th><th class="time">Time</th><th class="addr">Source</th><th class="addr">Destination</th><th class="proto">Protocol</th><th class="len">Length</th><th>Info</th></tr></thead>
            <tbody>${rows.join("")}</tbody>
        </table>
        `;
    }
}

class PacketDetails extends BaseElement {
    styles() {
        return `
        :host { display: block; background: #fff; font: 17px/20px "Liberation Mono", monospace; min-height: 0; }
        button { width: 100%; justify-content: flex-start; }
        button::before { content: ""; width: 8px; margin: 0 10px; border: 6px solid transparent; border-left: 8px solid #333; border-right: 0; }
        span { flex: 1; text-align: left; padding-left: 4px; background: #f0ebe8; }
        .sel, .sel span { background: #1f80cd; }
        .sel { color: #b8e4ff; }
        .tcp span { background: #70aafc; color: #14233c; }
        `;
    }

    render() {
        return [
            ["", "Frame 1: 74 bytes on wire (592 bits), 74 bytes captured (592 bits) on interface 0"],
            ["", "Ethernet II, Src: 00:00:00_00:00:00 (00:00:00:00:00:00), Dst: 00:00:00_00:00:00 (00:00:00:00:00:00)"],
            ["sel", "Internet Protocol Version 4, Src: 127.0.0.1, Dst: 127.0.0.1"],
            ["tcp", "Transmission Control Protocol, Src Port: 32860, Dst Port: 8080, Seq: 0, Len: 0"],
        ].map(([cls, text]) => `<button type="button" class="${cls}" aria-expanded="false"><span>${text}</span></button>`).join("");
    }
}

class PacketBytes extends BaseElement {
    styles() {
        return `
        :host { display: grid; grid-template-columns: 58px 503px 1fr; background: #fff; min-height: 0;
            font: 16px/20px "Liberation Mono", monospace; color: #222; }
        pre { margin: 0; font: inherit; }
        .offset { padding-left: 9px; background: #efe9e6; color: #8f8c8a; }
        .hex { padding-left: 10px; }
        .ascii { padding-left: 10px; }
        mark { display: inline-block; height: 20px; background: #1f80cd; color: #d4efff; }
        `;
    }

    render() {
        return `
<pre class="offset">0000
0010
0020
0030
0040</pre>
<pre class="hex">00 00 00 00 00 00 00 00  00 00 00 00 08 00 <mark>45 00</mark>
<mark>00 3c 23 ef 40 00 40 06  18 cb 7f 00 00 01 7f 00</mark>
<mark>00 01</mark> 80 5c 1f 90 30 a2  01 04 00 00 00 00 a0 02
aa aa fe 30 00 00 02 04  ff d7 04 02 08 0a 01 78
22 eb 00 00 00 00 01 03  03 07</pre>
<pre class="ascii">········ ······<mark>E·</mark>
<mark>·&lt;#·@·@· ········</mark>
<mark>··</mark>·\\··0· ········
···0···· ·······x
"······· ··</pre>`;
    }
}

class StatusBar extends BaseElement {
    styles() {
        return `
        :host { display: grid; grid-template-columns: 1fr 496px auto; align-items: center; height: 32px; padding: 0 6px 0 11px;
            background: #efe9e6; border-top: 2px solid #aaa5a3; color: #111; }
        .left { display: flex; align-items: center; gap: 12px; }
        .left span { margin-left: 8px; }
        `;
    }

    render() {
        return `
        <div class="left">${ICONS.expert}${ICONS.comment}<span>Internet Protocol Version 4 (ip), 20 bytes</span></div>
        <span>Packets: 22 · Displayed: 14 (63.6%)</span>
        <span>Profile: Default</span>
        `;
    }
}

// tiles sit on a slanted lattice that starts around the window's first pane
class WaterMark extends BaseElement {
    styles() {
        return `
        :host { display: block; position: relative; overflow: hidden; color: #0000000f; }
        .tile { position: absolute; white-space: pre; transform: rotate(-18deg); transform-origin: 0 0;
            font: 24px/28px "Liberation Serif", "Noto Sans CJK SC", serif; }
        .brand { position: absolute; top: 46px; right: 36px; display: flex; align-items: center; gap: 16px; line-height: 56px;
            color: #ffffff28; font-family: "Noto Sans CJK SC", sans-serif; font-size: 37px; font-weight: 700; }
        .brand i { color: #9aa4b430; font-size: 45px; }
        `;
    }

    render() {
        let tiles = "";
        for (let row = -4; row < 6; row++) {
            for (let col = -2; col < 7; col++) {
                const x = 265 + col * 316 + row * 72;
                const y = 556 - col * 84 + row * 265;
                if (x < -60 || x > 1900 || y < -20 || y > 1010) continue;
                tiles += `<div class="tile" style="left:${x}px;top:${y}px">2025-07-29\n田涛01\nQIANXIN</div>`;
            }
        }
        return `${tiles}<div class="brand"><span>技术简说</span><i>bilibili</i></div>`;
    }
}

class VideoHeader extends BaseElement {
    styles() {
        return `
        :host { display: flex; align-items: center; justify-content: space-between; align-self: start; padding: 28px 34px 0 29px;
            color: #fff; font-family: "Noto Sans CJK SC", sans-serif; font-size: 25px; line-height: 32px; z-index: 1; }
        h1 { margin: 0; font: inherit; }
        `;
    }

    render() {
        return `<h1><slot></slot></h1>${this.iconButton("help", "反馈")}`;
    }
}

class PlayerControls extends BaseElement {
    time(s) {
        return `${Math.floor(s / 60)}:${String(s % 60).padStart(2, "0")}`;
    }

    styles() {
        return `
        :host { display: block; padding: 0 15px 26px; color: #fff; font: 500 20px/24px "Noto Sans CJK SC", sans-serif; }
        .seek { display: grid; align-items: center; height: 28px; margin-bottom: 15px; }
        .seek > * { grid-area: 1 / 1; }
        .seek input { width: 100%; opacity: 0; }
        .track { height: 7px; border-radius: 1px; background: #ffffff30; }
        .fill { display: flex; align-items: center; }
        .fill i { height: 7px; background: #00aeec; }
        .fill svg { margin-left: -12px; }
        .row { display: flex; align-items: center; height: 40px; padding: 0 17px 0 23px; }
        .play { display: flex; align-items: center; gap: 45px; }
        .time { font-size: 19px; font-weight: 400; }
        .danmu { display: flex; align-items: center; gap: 18px; margin-left: auto; }
        form { display: flex; width: 39%; height: 40px; margin: 0 76px 0 16px; border-radius: 8px; overflow: hidden; font-size: 16px; font-weight: 400; }
        form input { flex: 1; min-width: 0; padding: 0 9px; background: #ffffff40; outline: 0; }
        form input::placeholder { color: #ffffffa0; opacity: 1; }
        form button { width: 77px; background: #e3e5e7; color: #9499a0; }
        .text { display: flex; gap: 26px; font-weight: 700; margin-right: 30px; }
        .rate { width: 60px; }
        .icons { display: flex; gap: 38px; }
        .icons button { width: 30px; }
        `;
    }

    render() {
        const current = Number(this.getAttribute("current"));
        const duration = Number(this.getAttribute("duration"));
        const percent = Math.round(current / duration * 100);
        return `
        <div class="seek">
            <div class="track"></div>
            <div class="fill"><i style="width:${percent}%"></i>${ICONS.thumb}</div>
            <input type="range" min="0" max="${duration}" value="${current}" aria-label="进度">
        </div>
        <div class="row">
            <div class="play">
                ${this.iconButton("prev", "上一个")}
                ${this.iconButton("play", "暂停")}
                ${this.iconButton("next", "下一个")}
                <span class="time">${this.time(current)} / ${this.time(duration)}</span>
            </div>
            <div class="danmu">${this.iconButton("danmu", "弹幕开关")}${this.iconButton("danmuset", "弹幕设置")}</div>
            <form>
                <input type="text" placeholder="已关闭弹幕" aria-label="弹幕">
                <button type="button">发送</button>
            </form>
            <div class="text">
                <button type="button">1080P 高清</button>
                <button type="button">选集</button>
                <button type="button" class="rate">1.5x</button>
            </div>
            <div class="icons">
                ${this.iconButton("volume", "音量")}
                ${this.iconButton("gear", "设置")}
                ${this.iconButton("pip", "画中画")}
                ${this.iconButton("wide", "宽屏")}
            </div>
        </div>
        `;
    }
}

customElements.define("top-panel", TopPanel);
customElements.define("vm-toolbar", VmToolbar);
customElements.define("unity-launcher", UnityLauncher);
customElements.define("menu-bar", MenuBar);
customElements.define("tool-bar", ToolBar);
customElements.define("filter-bar", FilterBar);
customElements.define("packet-list", PacketList);
customElements.define("packet-details", PacketDetails);
customElements.define("packet-bytes", PacketBytes);
customElements.define("status-bar", StatusBar);
customElements.define("wireshark-window", WiresharkWindow);
customElements.define("ubuntu-desktop", UbuntuDesktop);
customElements.define("water-mark", WaterMark);
customElements.define("video-header", VideoHeader);
customElements.define("player-controls", PlayerControls);
customElements.define("video-player", VideoPlayer);
</script>
</body>
</html>
